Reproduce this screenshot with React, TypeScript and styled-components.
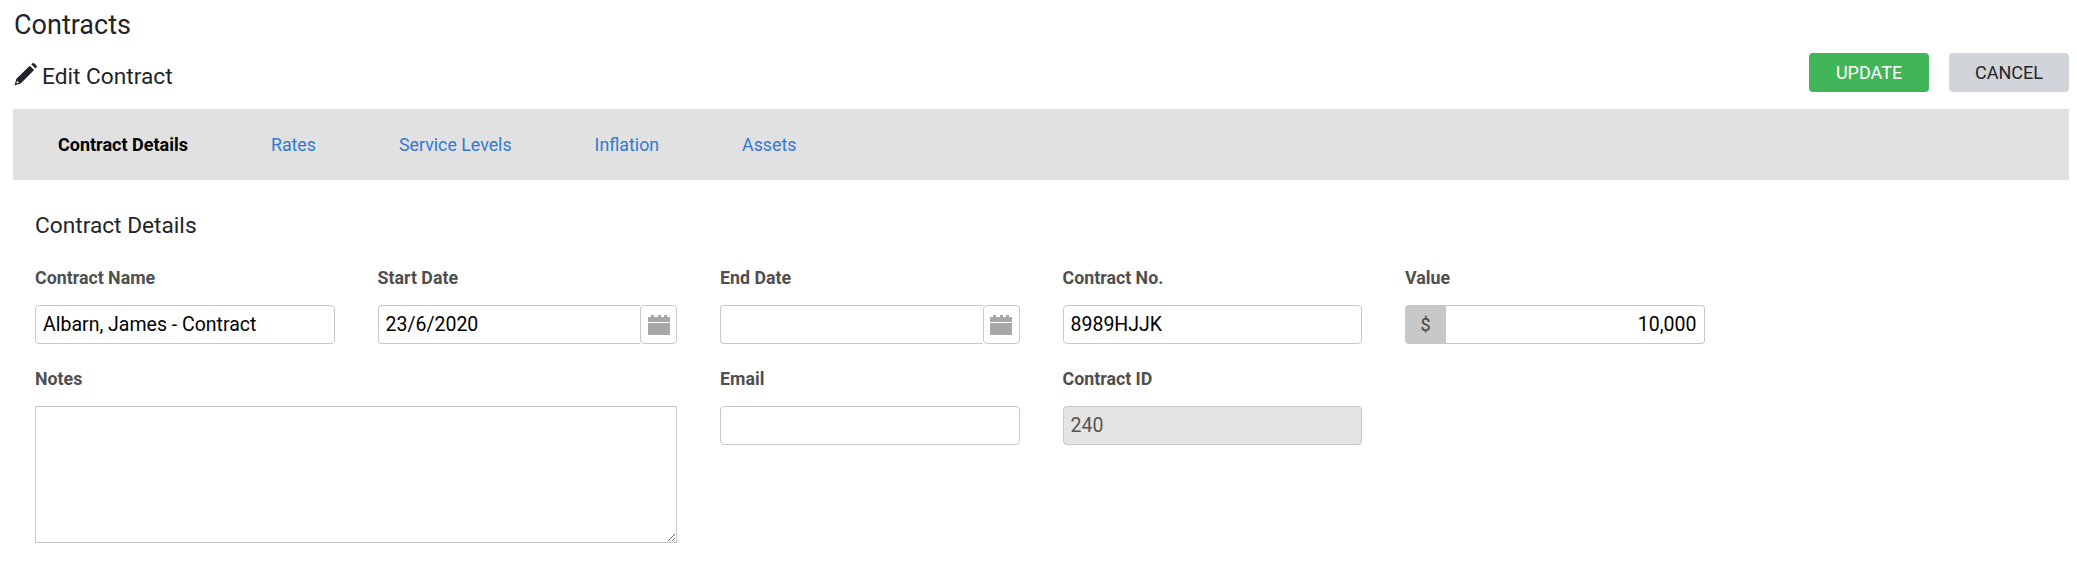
import styled, { createGlobalStyle } from "styled-components";

const GlobalStyle = createGlobalStyle`
  html, body {
    margin: 0;
    background: #fff;
    font-family: Roboto, "Liberation Sans", sans-serif;
    color: #212529;
  }
`;

const Page = styled.div`
  padding: 8px 8px 0 13px;
  width: 2077px;
  height: 585px;
  box-sizing: border-box;
  overflow: hidden;
`;

const PageTitle = styled.h1`
  margin: 0;
  height: 36px;
  padding-left: 1px;
  font-size: 27px;
  line-height: 34px;
  font-weight: 400;
  color: #212529;
`;

const Toolbar = styled.div`
  display: flex;
  align-items: flex-end;
  justify-content: space-between;
  height: 48px;
  padding-left: 1px;
`;

const EditTitle = styled.h2`
  display: flex;
  align-items: center;
  gap: 5px;
  margin: 0;
  font-size: 22.7px;
  line-height: 30px;
  font-weight: 400;
  color: #212529;
`;

const PencilIcon = styled.svg`
  width: 23px;
  height: 23px;
  margin-top: -5px;
  fill: #212529;
`;

const Actions = styled.div`
  display: flex;
  gap: 20px;
`;

const ActionButton = styled.button<{ $primary?: boolean }>`
  width: 120px;
  height: 39px;
  border: 0;
  border-radius: 4px;
  padding: 0;
  font-family: inherit;
  font-size: 18px;
  background: ${(p) => (p.$primary ? "#41b658" : "#d1d5d9")};
  color: ${(p) => (p.$primary ? "#fff" : "#212529")};
`;

const TabBar = styled.nav`
  display: flex;
  align-items: center;
  height: 71px;
  margin-top: 17px;
  padding-left: 45px;
  gap: 83px;
  background: #e1e1e1;
`;

const Tab = styled.a<{ $active?: boolean }>`
  font-size: ${(p) => (p.$active ? "18px" : "17.8px")};
  font-weight: ${(p) => (p.$active ? 700 : 400)};
  color: ${(p) => (p.$active ? "#000" : "#3279d3")};
`;

const Form = styled.section`
  padding: 32px 0 0 22px;
`;

const SectionTitle = styled.h3`
  margin: 0;
  font-size: 22.7px;
  line-height: 28px;
  font-weight: 400;
  color: #212529;
`;

const Grid = styled.div`
  display: grid;
  grid-template-columns: repeat(5, 299.5px);
  grid-template-rows: 101px 175px;
  column-gap: 43px;
  margin-top: 26px;
`;

const Field = styled.div<{ $span?: number }>`
  grid-column: span ${(p) => p.$span ?? 1};
`;

const Label = styled.label`
  display: block;
  height: 39px;
  font-size: 17.8px;
  line-height: 24px;
  font-weight: 700;
  color: #4f4f4f;
`;

const Group = styled.div`
  display: flex;
  height: 39px;
`;

const TextInput = styled.input<{ $joinLeft?: boolean; $joinRight?: boolean }>`
  flex: 1;
  min-width: 0;
  box-sizing: border-box;
  padding: 0 7px;
  border: 1px solid #c8c8c8;
  border-radius: 4px;
  ${(p) => p.$joinLeft && "border-radius: 0 4px 4px 0; border-left: 0; text-align: right;"}
  ${(p) => p.$joinRight && "border-radius: 4px 0 0 4px; border-right: 0;"}
  font-family: inherit;
  font-size: 19.5px;
  color: #000;
  background: #fff;
  outline: none;

  &:disabled {
    background: #e4e4e4;
    color: #555;
  }
`;

const CalendarAddon = styled.span`
  display: flex;
  align-items: center;
  justify-content: center;
  width: 37px;
  box-sizing: border-box;
  border: 1px solid #c8c8c8;
  border-radius: 4px;
`;

const CalendarSvg = styled.svg`
  width: 22px;
  height: 20px;
  fill: #a8a8a8;
`;

const CurrencyAddon = styled.span`
  display: flex;
  align-items: center;
  justify-content: center;
  width: 41px;
  background: #c8c8c8;
  border-radius: 4px 0 0 4px;
  font-size: 18px;
  color: #444;
`;

const Notes = styled.textarea`
  display: block;
  width: 100%;
  height: 137px;
  box-sizing: border-box;
  border: 1px solid #c8c8c8;
  border-radius: 0;
  outline: none;
  font-family: inherit;
`;

function CalendarIcon() {
  return (
    <CalendarSvg viewBox="0 0 22 20">
      <rect x="3" y="0" width="3" height="3" />
      <rect x="10" y="0" width="3" height="3" />
      <rect x="16" y="0" width="3" height="3" />
      <rect x="0" y="2" width="22" height="5" />
      <rect x="0" y="8" width="22" height="12" />
    </CalendarSvg>
  );
}

export default function App() {
  return (
    <Page>
      <GlobalStyle />
      <PageTitle>Contracts</PageTitle>
      <Toolbar>
        <EditTitle>
          <PencilIcon viewBox="0 0 24 24">
            <path d="M0.5 23.5 L2.5 16.5 L16.5 2.8 L21 7.2 L7 21.3 Z" />
            <path d="M18 1.3 L19.3 0.3 Q20.4 -0.3 21.4 0.6 L23.4 2.6 Q24.2 3.7 23.4 4.7 L22.4 5.8 Z" />
            <path d="M3.2 18.6 L5.2 20.6 L2.4 21.5 Z" fill="#fff" />
          </PencilIcon>
          Edit Contract
        </EditTitle>
        <Actions>
          <ActionButton $primary>UPDATE</ActionButton>
          <ActionButton>CANCEL</ActionButton>
        </Actions>
      </Toolbar>
      <TabBar>
        <Tab $active>Contract Details</Tab>
        <Tab>Rates</Tab>
        <Tab>Service Levels</Tab>
        <Tab>Inflation</Tab>
        <Tab>Assets</Tab>
      </TabBar>
      <Form>
        <SectionTitle>Contract Details</SectionTitle>
        <Grid>
          <Field>
            <Label>Contract Name</Label>
            <Group>
              <TextInput defaultValue="Albarn, James - Contract" />
            </Group>
          </Field>
          <Field>
            <Label>Start Date</Label>
            <Group>
              <TextInput $joinRight defaultValue="23/6/2020" />
              <CalendarAddon>
                <CalendarIcon />
              </CalendarAddon>
            </Group>
          </Field>
          <Field>
            <Label>End Date</Label>
            <Group>
              <TextInput $joinRight />
              <CalendarAddon>
                <CalendarIcon />
              </CalendarAddon>
            </Group>
          </Field>
          <Field>
            <Label>Contract No.</Label>
            <Group>
              <TextInput defaultValue="8989HJJK" />
            </Group>
          </Field>
          <Field>
            <Label>Value</Label>
            <Group>
              <CurrencyAddon>$</CurrencyAddon>
              <TextInput $joinLeft defaultValue="10,000" />
            </Group>
          </Field>
          <Field $span={2}>
            <Label>Notes</Label>
            <Notes />
          </Field>
          <Field>
            <Label>Email</Label>
            <Group>
              <TextInput />
            </Group>
          </Field>
          <Field>
            <Label>Contract ID</Label>
            <Group>
              <TextInput disabled defaultValue="240" />
            </Group>
          </Field>
        </Grid>
      </Form>
    </Page>
  );
}
